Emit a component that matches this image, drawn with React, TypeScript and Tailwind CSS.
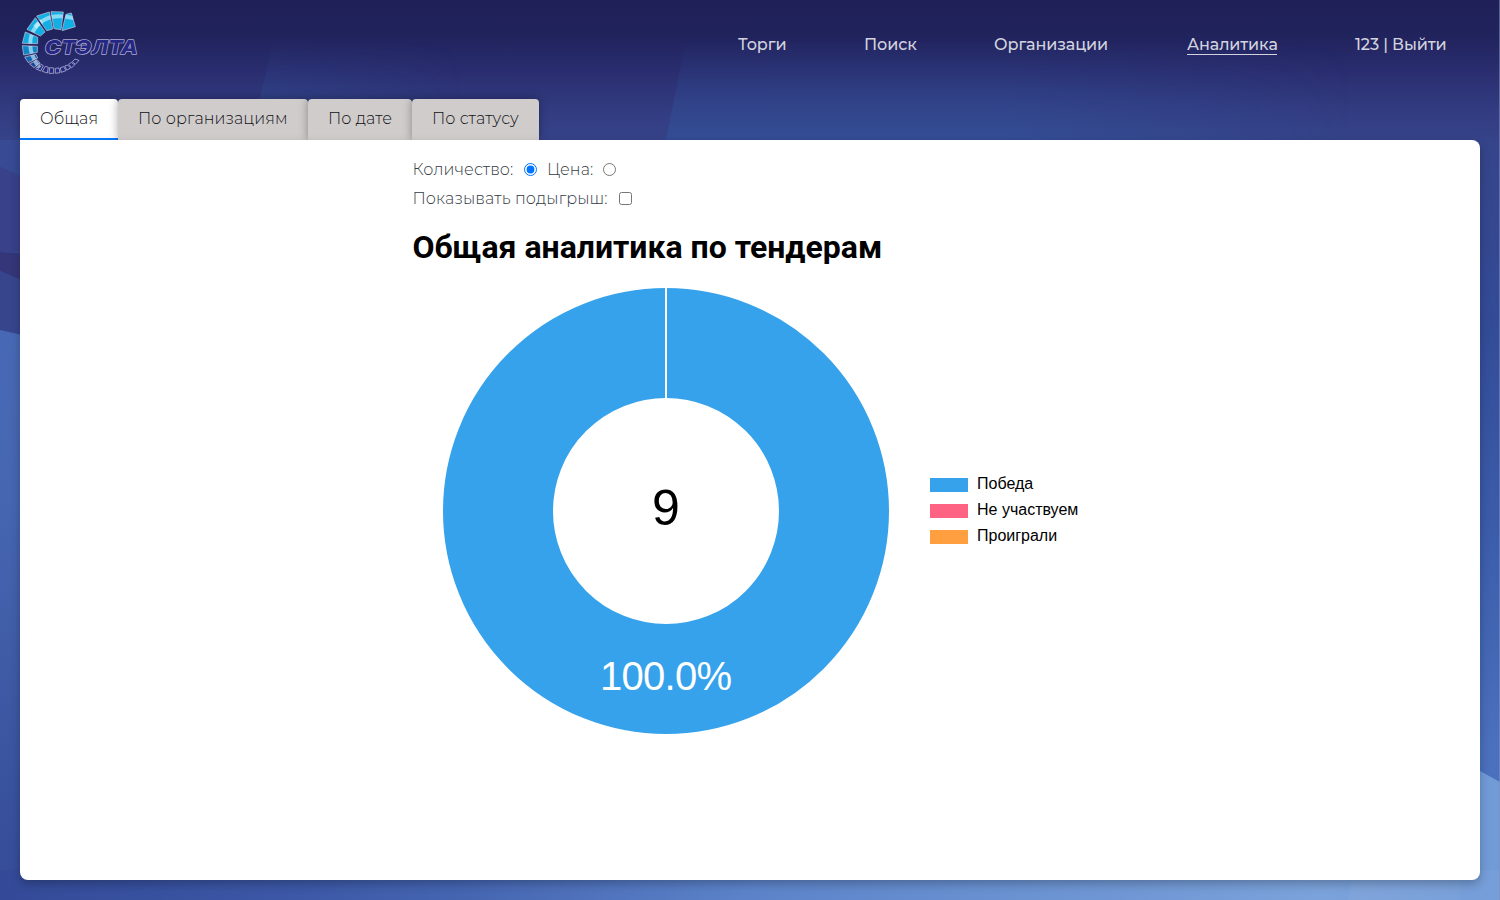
import React from "react";

const segments = [
  { d: "M168 43L184 39L196 80L156 92Z", c: "#10b0e4" },
  { d: "M123 35L160 36L153 89L132 86Z", c: "#10b0e4" },
  { d: "M80 48L118 36L128 87L110 92Z", c: "#10b0e4" },
  { d: "M51 88L76 53L105 96L91 108Z", c: "#10b0e4" },
  { d: "M37 130L46 96L83 112L83 131Z", c: "#10a9e0" },
  { d: "M37 137L82 139L82 157L41 165Z", c: "#0e86c6" },
  { d: "M44 171L78 163L83 174L55 188Z", c: "#1465b0" },
  { d: "M59 192L81 179L90 189L72 203Z", c: "#1d4799" },
  { d: "M77 206L91 192L100 197L92 213Z", c: "#252e88" },
  { d: "M97 214L106 199L115 202L112 219Z", c: "#252882" },
  { d: "M117 220L119 203L131 204L131 220Z", c: "#252882" },
  { d: "M136 220L136 205L147 204L150 218Z", c: "#252882" },
  { d: "M154 217L151 203L161 200L168 212Z", c: "#252882" },
  { d: "M171 210L164 198L173 195L182 204Z", c: "#252882" },
  { d: "M185 203L176 193L184 187L194 195Z", c: "#252882" },
  { d: "M196 193L187 185L195 177L207 181Z", c: "#252882" },
];

function Logo() {
  return (
    <svg className="block h-[90px] w-[150px]" viewBox="0 0 450 270">
      <defs>
        <clipPath id="ring">
          {segments.map((s) => (
            <path key={s.d} d={s.d} />
          ))}
        </clipPath>
      </defs>
      {segments.map((s) => (
        <path key={s.d} d={s.d} fill={s.c} stroke="#b5b5d3" strokeWidth="2.4" strokeLinejoin="round" />
      ))}
      <g clipPath="url(#ring)" fill="none" stroke="#d9f6ff">
        <path d="M190 54Q100 32 67 98Q47 151 89 203" strokeWidth="12" opacity=".6" />
        <path d="M75 82Q85 70 95 64" strokeWidth="14" opacity=".6" />
      </g>
      <text
        x="104"
        y="163"
        textLength="279"
        lengthAdjust="spacingAndGlyphs"
        fill="#252882"
        stroke="#aca9cf"
        strokeWidth="4"
        strokeLinejoin="round"
        paintOrder="stroke"
        className="font-['Inter',sans-serif] text-[57px] font-extrabold italic"
      >
        СТЭЛТА
      </text>
    </svg>
  );
}

function Background() {
  return (
    <svg className="absolute inset-0 h-full w-full" viewBox="0 0 1500 900" preserveAspectRatio="none" aria-hidden="true">
      <defs>
        <linearGradient id="sky" x1="0" y1="0" x2="0" y2="1">
          <stop offset="0" stopColor="#1f2057" />
          <stop offset=".04" stopColor="#21235d" />
          <stop offset=".08" stopColor="#2a2e70" />
          <stop offset=".12" stopColor="#323b80" />
          <stop offset=".16" stopColor="#36448a" />
          <stop offset=".35" stopColor="#334b96" />
          <stop offset=".6" stopColor="#3c5dab" />
          <stop offset=".83" stopColor="#4b70bd" />
        </linearGradient>
        <linearGradient id="left" x1="0" y1="330" x2="0" y2="900" gradientUnits="userSpaceOnUse">
          <stop offset="0" stopColor="#4769b5" />
          <stop offset=".3" stopColor="#4666b1" />
          <stop offset="1" stopColor="#354b97" />
        </linearGradient>
        <linearGradient id="base" x1="0" y1="0" x2="1500" y2="0" gradientUnits="userSpaceOnUse">
          <stop offset="0" stopColor="#344a98" />
          <stop offset=".2" stopColor="#3c58a6" />
          <stop offset=".31" stopColor="#4565b1" />
          <stop offset=".5" stopColor="#5c83c9" />
          <stop offset=".88" stopColor="#7ba2da" />
          <stop offset="1" stopColor="#739cd7" />
        </linearGradient>
        <linearGradient id="beam" x1="0" y1="40" x2="0" y2="145" gradientUnits="userSpaceOnUse">
          <stop offset="0" stopColor="#315aa3" stopOpacity="0" />
          <stop offset="1" stopColor="#315aa3" stopOpacity=".48" />
        </linearGradient>
        <linearGradient id="fade" x1="260" y1="0" x2="460" y2="0" gradientUnits="userSpaceOnUse">
          <stop offset="0" stopColor="#fff" />
          <stop offset="1" stopColor="#000" />
        </linearGradient>
        <linearGradient id="fadeRight" x1="660" y1="0" x2="1350" y2="0" gradientUnits="userSpaceOnUse">
          <stop offset="0" stopColor="#fff" />
          <stop offset=".5" stopColor="#fff" />
          <stop offset="1" stopColor="#000" />
        </linearGradient>
        <mask id="beamMask"><rect width="1500" height="900" fill="url(#fade)" /></mask>
        <mask id="beamMaskRight"><rect width="1500" height="900" fill="url(#fadeRight)" /></mask>
      </defs>
      <rect width="1500" height="900" fill="url(#sky)" />
      <path d="M280 15L258 105L250 145H660V15Z" fill="url(#beam)" mask="url(#beamMask)" />
      <path d="M686 40L665 145H1400V40Z" fill="url(#beam)" mask="url(#beamMaskRight)" />
      <path d="M0 140H40V185L0 167Z" fill="#374a93" />
      <path d="M0 167L40 185V252H0Z" fill="#384189" />
      <path d="M0 252L40 255V288L0 271Z" fill="#353679" />
      <path d="M0 271L40 288V340L0 330Z" fill="#37458d" />
      <path d="M0 330L40 339V900H0Z" fill="url(#left)" />
      <rect y="870" width="1500" height="30" fill="url(#base)" />
      <path d="M1460 760L1500 782V900H1460Z" fill="#719bd7" />
      <path d="M1354 870L1348 900H1500V870Z" fill="#fff" opacity=".04" />
      <rect x="1499" width="1" height="900" fill="#8290bb" opacity=".6" />
    </svg>
  );
}

const navItems = [
  { label: "Торги", cls: "w-[48px]" },
  { label: "Поиск", cls: "w-[52px]" },
  { label: "Организации", cls: "w-[115px]" },
  { label: "Аналитика", cls: "w-[90px] border-b border-[#d2d3de]" },
  { label: "123 | Выйти", cls: "w-[91px]" },
];

const tabs = [
  { label: "Общая", cls: "w-[98px] border-b-2 border-[#007bff] bg-white" },
  { label: "По организациям", cls: "w-[190px] bg-[#d0cccb] pb-[2px]" },
  { label: "По дате", cls: "w-[104px] bg-[#d0cccb] pb-[2px]" },
  { label: "По статусу", cls: "w-[127px] bg-[#d0cccb] pb-[2px]" },
];

const legend = [
  { label: "Победа", color: "bg-[#36a2eb]" },
  { label: "Не участвуем", color: "bg-[#ff6384]" },
  { label: "Проиграли", color: "bg-[#ff9f40]" },
];

export default function App() {
  return (
    <div className="relative h-[900px] w-full overflow-hidden font-['Montserrat','Inter',sans-serif]">
      <Background />
      <div className="relative flex h-full flex-col">
        <header className="flex h-[99px] items-start justify-between pr-[54px] pl-[10px]">
          <Logo />
          <nav className="flex gap-[78px] pt-[34px] text-[16px] font-medium tracking-[-0.1px] text-[#d2d3de]">
            {navItems.map((n) => (
              <a key={n.label} className={`block h-[21px] leading-[21px] whitespace-nowrap ${n.cls}`}>
                {n.label}
              </a>
            ))}
          </nav>
        </header>
        <div className="flex h-[41px] shrink-0 pl-5 text-[16px] font-light tracking-[0.08px] text-[#101215]">
          {tabs.map((t) => (
            <button key={t.label} className={`h-[41px] rounded-t-[4px] px-5 text-left whitespace-nowrap shadow-[0_0_10px_rgba(0,0,0,0.35)] ${t.cls}`}>
              {t.label}
            </button>
          ))}
        </div>
        <main className="relative mx-5 h-[740px] rounded-tr-lg rounded-b-lg bg-white pt-[15px] pl-[392.5px] shadow-[0_4px_10px_rgba(0,0,0,0.25)]">
          <div className="flex h-[29px] items-center text-[16px] font-light tracking-[0.1px] text-[#343b43]">
            <span className="w-[111.5px] whitespace-nowrap">Количество:</span>
            <input type="radio" name="kind" defaultChecked className="m-0 h-[13px] w-[13px] accent-[#0075ff]" />
            <span className="ml-[10px] w-[56px] whitespace-nowrap">Цена:</span>
            <input type="radio" name="kind" className="m-0 h-[13px] w-[13px]" />
          </div>
          <div className="flex h-[29px] items-center text-[16px] font-light tracking-[0.1px] text-[#343b43]">
            <span className="w-[206.5px] whitespace-nowrap">Показывать подыгрыш:</span>
            <input type="checkbox" className="m-0 h-[13px] w-[13px]" />
          </div>
          <h1 className="mt-[15px] h-[38px] font-[Roboto,sans-serif] text-[32px] leading-[38px] font-bold whitespace-nowrap text-black">Общая аналитика по тендерам</h1>
          <div className="flex pt-[22px] pl-[29.5px]">
            <svg className="h-[448px] w-[448px]" viewBox="0 0 448 448">
              <circle cx="224" cy="223" r="168" fill="none" stroke="#36a2eb" strokeWidth="110" />
              <path d="M224 0V113" stroke="#fff" strokeWidth="2" />
              <text x="224" y="237" textAnchor="middle" className="font-['Liberation_Sans',sans-serif] text-[50px]">9</text>
              <text x="224" y="402" textAnchor="middle" textLength="132" fill="#fff" className="font-['Liberation_Sans',sans-serif] text-[40px]">100.0%</text>
            </svg>
            <ul className="ml-[40px] flex flex-col pt-[183px] font-['Liberation_Sans',sans-serif] text-[16px] text-black">
              {legend.map((l) => (
                <li key={l.label} className="flex h-[26px] items-center gap-[9px]">
                  <span className={`mt-[1px] h-[14px] w-[38px] ${l.color}`} />
                  <span>{l.label}</span>
                </li>
              ))}
            </ul>
          </div>
        </main>
      </div>
    </div>
  );
}
